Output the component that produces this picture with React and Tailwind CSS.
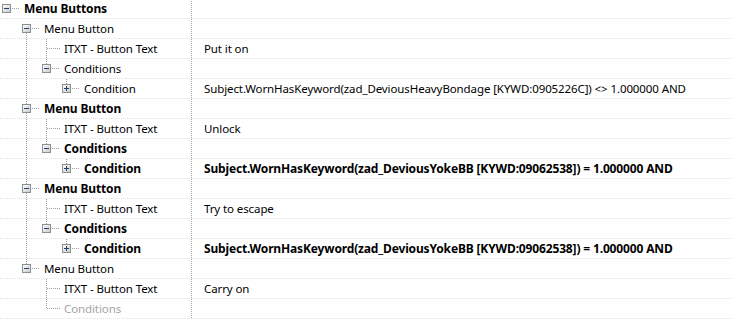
import React from "react";

const rows = [
  { level: 0, label: "Menu Buttons", bold: true, box: "minus", up: false, down: false, rails: [] },
  { level: 1, label: "Menu Button", box: "minus", up: false, down: true, rails: [false] },
  { level: 2, label: "ITXT - Button Text", up: true, down: true, rails: [false, true], value: "Put it on" },
  { level: 2, label: "Conditions", box: "minus", up: true, down: false, rails: [false, true] },
  {
    level: 3,
    label: "Condition",
    box: "plus",
    up: true,
    down: false,
    rails: [false, true, false],
    value: "Subject.WornHasKeyword(zad_DeviousHeavyBondage [KYWD:0905226C]) <> 1.000000 AND",
  },
  { level: 1, label: "Menu Button", bold: true, box: "minus", up: true, down: true, rails: [false] },
  { level: 2, label: "ITXT - Button Text", up: true, down: true, rails: [false, true], value: "Unlock" },
  { level: 2, label: "Conditions", bold: true, box: "minus", up: true, down: false, rails: [false, true] },
  {
    level: 3,
    label: "Condition",
    bold: true,
    box: "plus",
    up: true,
    down: false,
    rails: [false, true, false],
    value: "Subject.WornHasKeyword(zad_DeviousYokeBB [KYWD:09062538]) = 1.000000 AND",
    valueBold: true,
  },
  { level: 1, label: "Menu Button", bold: true, box: "minus", up: true, down: true, rails: [false] },
  { level: 2, label: "ITXT - Button Text", up: true, down: true, rails: [false, true], value: "Try to escape" },
  { level: 2, label: "Conditions", bold: true, box: "minus", up: true, down: false, rails: [false, true] },
  {
    level: 3,
    label: "Condition",
    bold: true,
    box: "plus",
    up: true,
    down: false,
    rails: [false, true, false],
    value: "Subject.WornHasKeyword(zad_DeviousYokeBB [KYWD:09062538]) = 1.000000 AND",
    valueBold: true,
  },
  { level: 1, label: "Menu Button", box: "minus", up: true, down: false, rails: [false] },
  { level: 2, label: "ITXT - Button Text", up: true, down: true, rails: [false, false], value: "Carry on" },
  { level: 2, label: "Conditions", dim: true, up: true, down: false, rails: [false, false] },
];

const Rail = ({ on }) => (
  <svg width="20" height="20" className="shrink-0 -mb-px" shapeRendering="crispEdges">
    {on && <line x1="6.5" y1="0" x2="6.5" y2="20" stroke="#a0a0a0" strokeDasharray="1 1" />}
  </svg>
);

const Node = ({ box, up, down }) => (
  <svg width="20" height="20" className="shrink-0 -mb-px" shapeRendering="crispEdges">
    <defs>
      <linearGradient id="bx" x1="0" y1="0" x2="1" y2="1">
        <stop offset="0" stopColor="#ffffff" />
        <stop offset="1" stopColor="#c8c8c8" />
      </linearGradient>
    </defs>
    {up && <line x1="6.5" y1="0" x2="6.5" y2={box ? 5 : 10} stroke="#a0a0a0" strokeDasharray="1 1" />}
    {down && <line x1="6.5" y1={box ? 14 : 10} x2="6.5" y2="20" stroke="#a0a0a0" strokeDasharray="1 1" />}
    <line x1={box ? 12 : 7} y1="9.5" x2="20" y2="9.5" stroke="#a0a0a0" strokeDasharray="1 1" />
    {box && (
      <g>
        <rect x="2.5" y="5.5" width="8" height="8" fill="url(#bx)" stroke="#8e8f8f" />
        <line x1="4" y1="9.5" x2="9" y2="9.5" stroke="#1d3f77" />
        {box === "plus" && <line x1="6.5" y1="7" x2="6.5" y2="12" stroke="#1d3f77" />}
      </g>
    )}
  </svg>
);

// regular text runs a bit narrower than bold in the original font, so they get different tweaks
const textCls = (bold) =>
  bold ? "font-bold text-[12px] tracking-[-0.15px]" : "text-[11.5px] tracking-[-0.1px]";

export default function App() {
  return (
    <div className="w-[732px] h-[324px] overflow-hidden bg-white text-black font-['Noto_Sans',sans-serif]">
      <div className="-mt-px">
        {rows.map((r, i) => (
          <div key={i} className="flex h-5 border-b border-dotted border-[#e1e1e1]">
            <div className="flex w-[192px] shrink-0 items-center border-r border-dotted border-[#a8a8a8]">
              {r.rails.map((on, j) => (
                <Rail key={j} on={on} />
              ))}
              <Node box={r.box} up={r.up} down={r.down} />
              <span
                className={`ml-[4px] whitespace-nowrap leading-none pt-px ${textCls(r.bold)} ${
                  r.dim ? "text-[#a3a3a3]" : ""
                }`}
              >
                {r.label}
              </span>
            </div>
            <div className="flex items-center pl-[12px] whitespace-nowrap">
              <span className={`leading-none pt-px ${textCls(r.valueBold)}`}>{r.value}</span>
            </div>
          </div>
        ))}
      </div>
    </div>
  );
}
